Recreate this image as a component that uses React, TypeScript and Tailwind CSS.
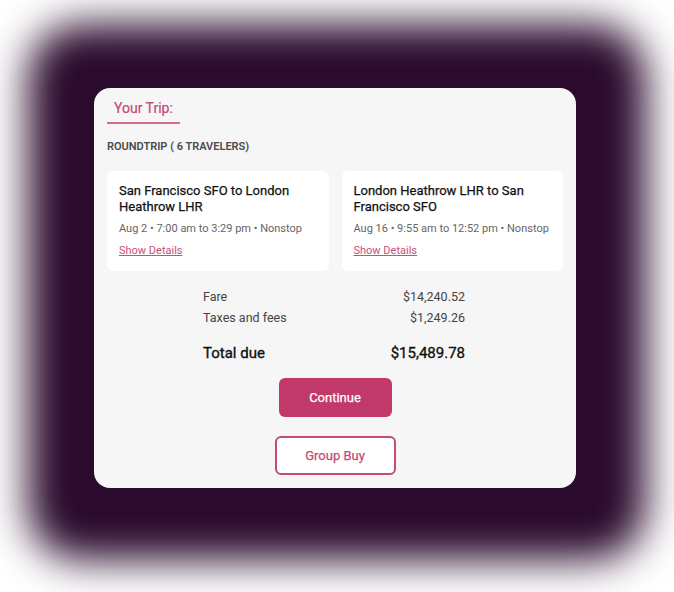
import React from "react";

interface Flight {
  route: string;
  time: string;
}

const flights: Flight[] = [
  {
    route: "San Francisco SFO to London Heathrow LHR",
    time: "Aug 2 • 7:00 am to 3:29 pm • Nonstop",
  },
  {
    route: "London Heathrow LHR to San Francisco SFO",
    time: "Aug 16 • 9:55 am to 12:52 pm • Nonstop",
  },
];

const FlightCard: React.FC<{ flight: Flight }> = ({ flight }) => (
  <div className="flex-1 bg-white rounded-md pt-[12px] pb-[12px] px-[12px]">
    <div className="text-[13px] leading-[16px] text-[#111111] pr-4 [-webkit-text-stroke:0.25px_#111111]">
      {flight.route}
    </div>
    <div className="mt-[6px] text-[11px] leading-[16px] text-[#666666]">
      {flight.time}
    </div>
    <a className="mt-[6px] block text-[11px] leading-[16px] text-[#c8507a] underline">
      Show Details
    </a>
  </div>
);

export default function App() {
  return (
    <div
      className="w-[674px] h-[592px] bg-white overflow-hidden pt-[88px] pl-[94px]"
      style={{ fontFamily: "Roboto, 'Noto Sans', sans-serif" }}
    >
      <div className="w-[482px] h-[400px] rounded-2xl bg-[#f6f6f6] px-[13px] pt-[8px] shadow-[2px_4px_40px_68px_#2a0a2d]">
        <div className="inline-block px-[7px] pb-[2px] border-b-2 border-[#d66a90]">
          <span className="text-[14px] leading-[20px] text-[#c54a74] [-webkit-text-stroke:0.2px_#c54a74]">
            Your Trip:
          </span>
        </div>

        <div className="mt-[15px] text-[11px] leading-[16px] font-semibold text-[#4a4a4a] uppercase">
          Roundtrip ( 6 Travelers)
        </div>

        <div className="mt-[16px] flex gap-[13px]">
          {flights.map((f) => (
            <FlightCard key={f.route} flight={f} />
          ))}
        </div>

        <div className="ml-[96px] w-[262px] mt-[17px] text-[#444444]">
          <div className="flex justify-between text-[12.5px] leading-[18px]">
            <span>Fare</span>
            <span>$14,240.52</span>
          </div>
          <div className="flex justify-between text-[12.5px] leading-[18px] mt-[3px]">
            <span>Taxes and fees</span>
            <span>$1,249.26</span>
          </div>
          <div className="flex justify-between text-[15px] leading-[20px] text-[#111111] mt-[16px] [-webkit-text-stroke:0.35px_#111111]">
            <span>Total due</span>
            <span>$15,489.78</span>
          </div>
        </div>

        <div className="flex flex-col items-center mt-[15px]">
          <button className="w-[113px] h-[39px] rounded-md bg-[#c0396a] text-white text-[13px] [-webkit-text-stroke:0.25px_#ffffff]">
            Continue
          </button>
          <button className="mt-[19px] w-[121px] h-[39px] rounded-md border-2 border-[#c54a74] bg-white text-[#c54a74] text-[13px] [-webkit-text-stroke:0.25px_#c54a74]">
            Group Buy
          </button>
        </div>
      </div>
    </div>
  );
}
